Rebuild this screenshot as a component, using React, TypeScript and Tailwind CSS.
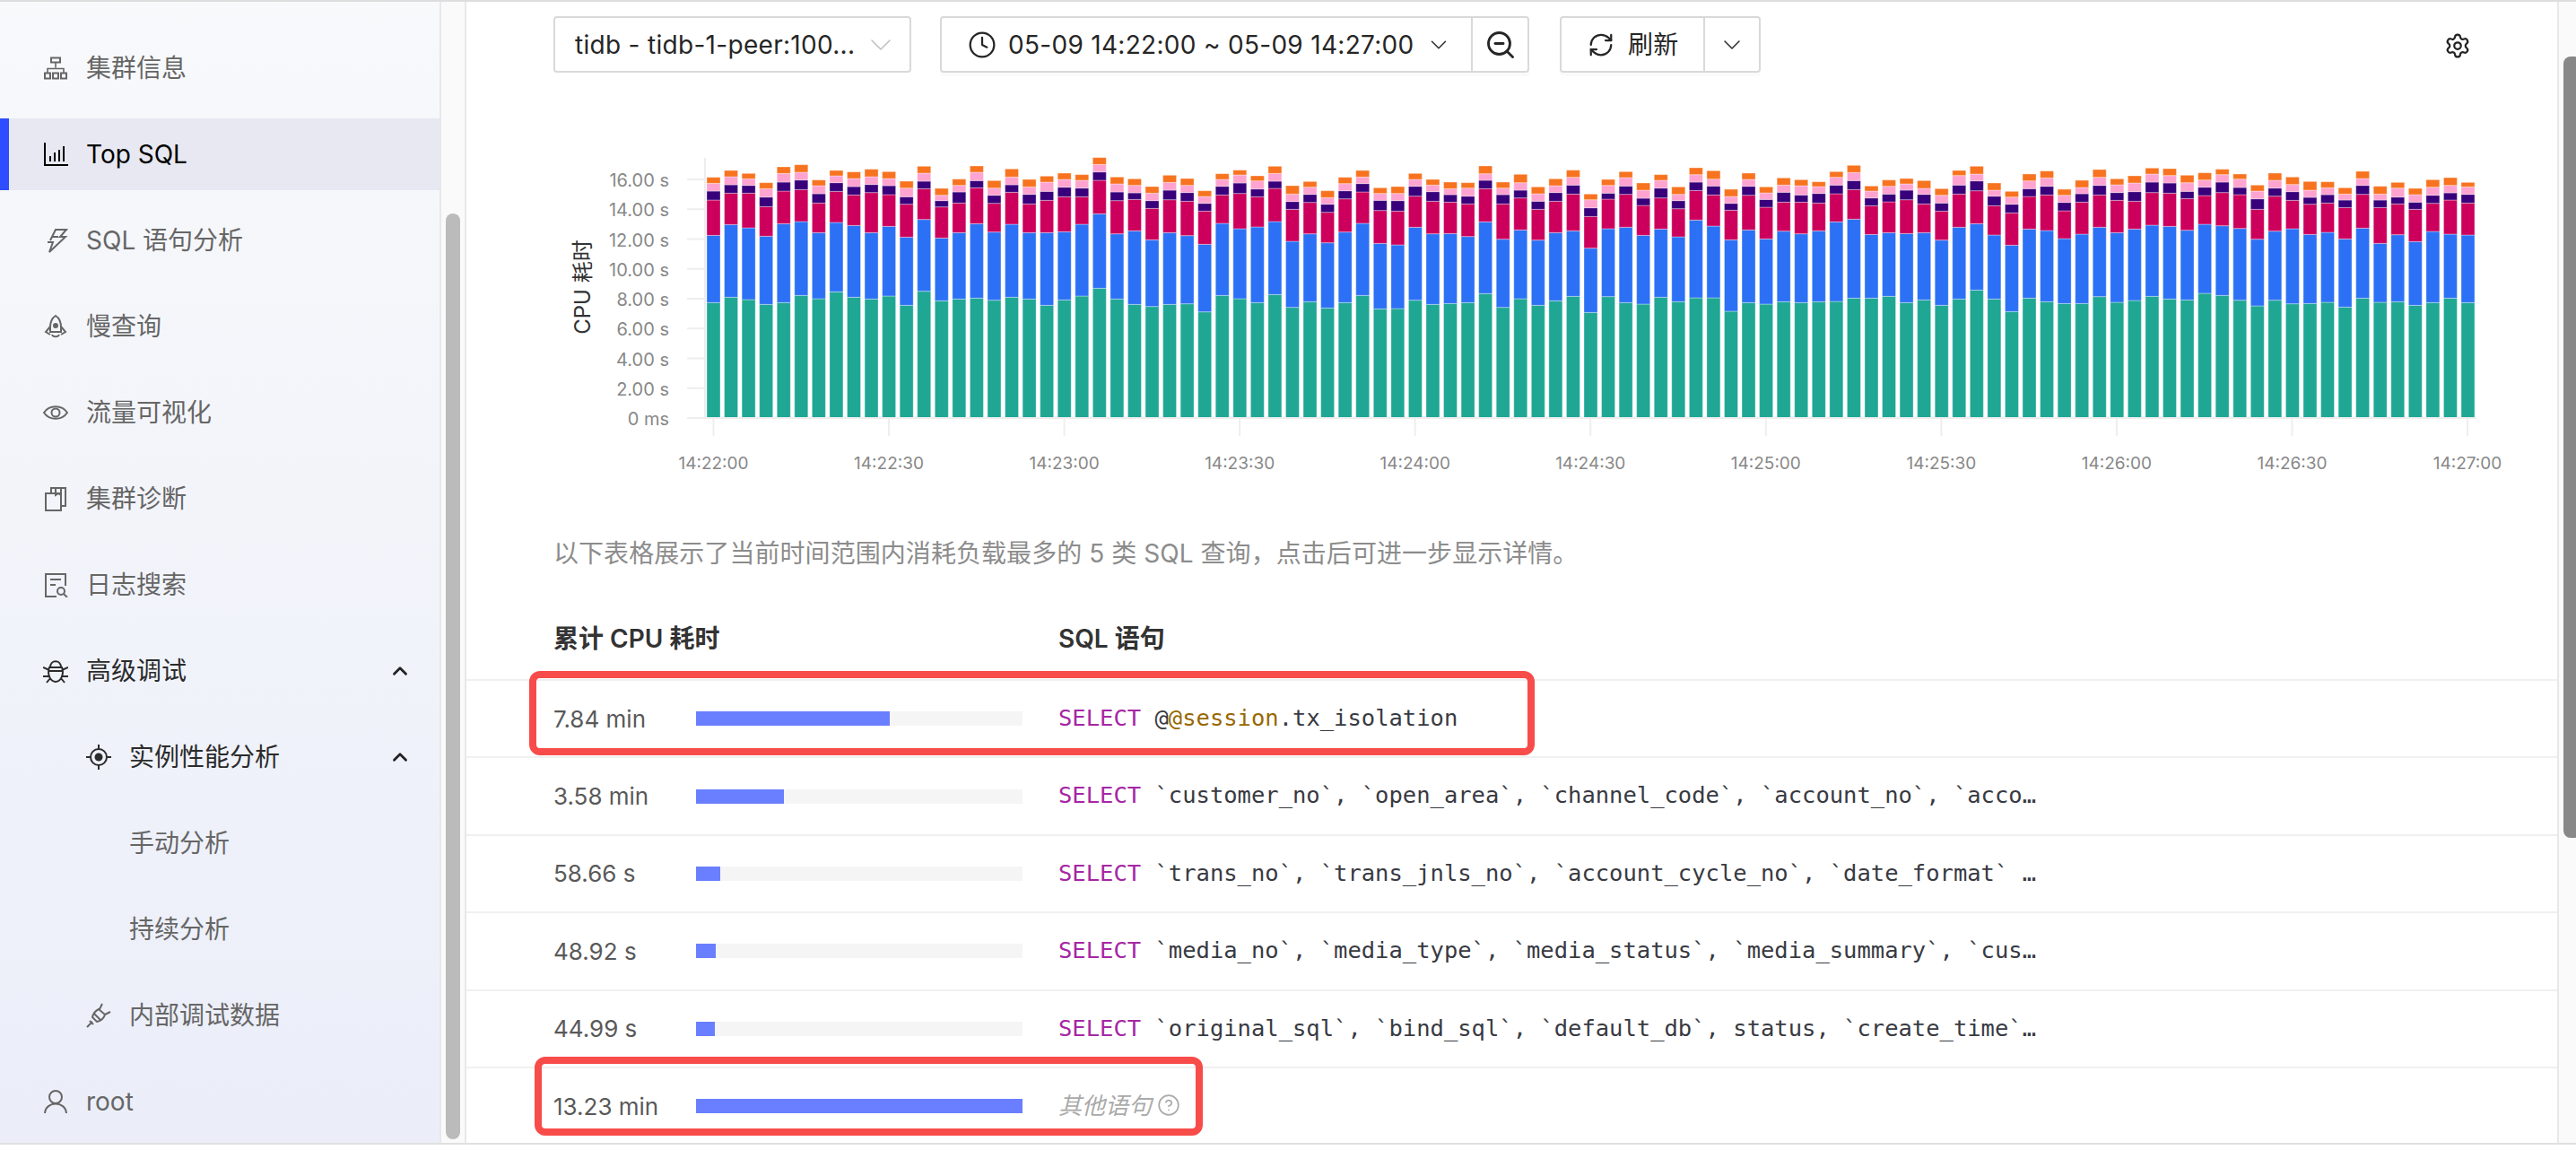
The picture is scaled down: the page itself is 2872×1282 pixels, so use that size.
import type { ReactNode } from 'react';
import { ChevronDown, ChevronUp, CircleHelp, Clock, RefreshCw, Settings, ZoomOut } from 'lucide-react';

// segment tops per bar, measured off the chart: teal, blue, crimson, purple, pink, orange
const bars: number[][] = [
  [532, 307, 189, 159, 133, 113], [514, 271, 166, 138, 111, 90], [522, 282, 166, 140, 118, 100], [538, 310, 211, 179, 151, 131],
  [532, 268, 159, 129, 100, 78], [508, 261, 154, 122, 96, 71], [519, 298, 199, 168, 141, 122], [496, 264, 160, 131, 108, 90],
  [514, 274, 172, 144, 117, 95], [520, 298, 164, 137, 111, 86], [510, 277, 171, 141, 117, 94], [541, 313, 203, 178, 149, 126],
  [494, 254, 151, 126, 99, 76], [526, 316, 212, 191, 173, 150], [520, 298, 199, 162, 140, 119], [517, 268, 148, 124, 96, 75],
  [524, 296, 200, 173, 149, 124], [514, 270, 163, 138, 112, 85], [520, 298, 202, 170, 145, 120], [541, 298, 190, 160, 129, 109],
  [523, 295, 178, 146, 120, 99], [510, 270, 178, 149, 123, 104], [484, 235, 123, 95, 70, 47], [520, 302, 191, 162, 135, 112],
  [538, 292, 187, 165, 140, 118], [545, 322, 217, 191, 166, 144], [538, 298, 188, 156, 130, 106], [536, 308, 193, 164, 140, 117],
  [563, 337, 226, 200, 177, 158], [508, 267, 172, 143, 120, 101], [519, 285, 167, 132, 105, 89], [532, 279, 178, 152, 125, 108],
  [505, 261, 150, 126, 100, 76], [548, 327, 220, 194, 169, 141], [529, 302, 197, 170, 146, 127], [550, 332, 230, 203, 181, 158],
  [532, 296, 185, 158, 134, 113], [508, 267, 162, 134, 112, 90], [553, 334, 224, 190, 167, 148], [552, 339, 226, 191, 167, 144],
  [524, 280, 176, 143, 120, 100], [538, 302, 193, 161, 139, 120], [535, 301, 196, 171, 151, 129], [532, 311, 202, 176, 149, 131],
  [502, 262, 151, 123, 101, 75], [548, 320, 202, 171, 149, 129], [519, 289, 182, 156, 131, 103], [541, 323, 220, 193, 168, 145],
  [526, 298, 193, 164, 141, 118], [511, 292, 169, 139, 113, 89], [565, 350, 244, 215, 188, 169], [512, 285, 186, 166, 140, 120],
  [532, 280, 170, 142, 114, 94], [537, 307, 207, 183, 156, 132], [514, 286, 182, 149, 123, 104], [529, 312, 218, 191, 170, 145],
  [516, 256, 157, 129, 104, 81], [516, 276, 172, 142, 119, 91], [561, 322, 223, 200, 177, 153], [532, 289, 173, 143, 120, 99],
  [537, 319, 213, 187, 165, 145], [529, 293, 196, 163, 139, 115], [532, 302, 196, 172, 141, 121], [529, 292, 199, 167, 144, 128],
  [528, 262, 168, 139, 113, 94], [517, 253, 154, 124, 97, 73], [517, 304, 208, 182, 159, 142], [511, 298, 195, 169, 143, 122],
  [532, 301, 188, 156, 135, 117], [523, 298, 202, 170, 150, 124], [541, 323, 226, 199, 173, 151], [520, 280, 169, 139, 107, 90],
  [490, 268, 158, 125, 102, 76], [520, 306, 208, 176, 156, 132], [562, 340, 232, 203, 179, 160], [517, 286, 177, 151, 125, 102],
  [529, 291, 172, 143, 115, 92], [535, 318, 225, 197, 173, 153], [535, 303, 196, 168, 147, 123], [512, 280, 172, 140, 113, 87],
  [531, 298, 190, 164, 138, 118], [525, 286, 193, 161, 132, 108], [511, 273, 164, 129, 102, 82], [520, 277, 166, 132, 107, 84],
  [523, 290, 184, 160, 131, 106], [501, 270, 174, 146, 122, 98], [508, 275, 164, 129, 104, 86], [524, 284, 171, 147, 119, 102],
  [543, 320, 220, 185, 159, 139], [524, 293, 176, 149, 123, 99], [536, 285, 190, 161, 137, 112], [535, 304, 203, 180, 156, 127],
  [531, 297, 199, 171, 148, 128], [547, 319, 214, 189, 169, 148], [517, 283, 170, 140, 117, 93], [531, 334, 214, 189, 169, 143],
  [529, 305, 202, 179, 149, 130], [541, 328, 220, 196, 171, 150], [532, 294, 200, 173, 146, 121], [517, 303, 189, 165, 140, 114],
  [532, 306, 199, 170, 145, 130],
];

const segmentColors = ['#1fa794', '#2c71f5', '#cc005c', '#38007a', '#ffa3d0', '#f7731f'];
const yLabels = ['16.00 s', '14.00 s', '12.00 s', '10.00 s', '8.00 s', '6.00 s', '4.00 s', '2.00 s', '0 ms'];
const xLabels = ['14:22:00', '14:22:30', '14:23:00', '14:23:30', '14:24:00', '14:24:30', '14:25:00', '14:25:30', '14:26:00', '14:26:30', '14:27:00'];

function Chart() {
  return (
    <svg viewBox="520 150 2331 400" className="mt-[69px] block h-[400px] w-[2331px] shrink-0">
      {bars.map((bar, i) => {
        const x = 788 + i * 19.56;
        return bar.map((top, s) => {
          const y = 160 + top / 3;
          const bottom = s === 0 ? 466 : 160 + bar[s - 1] / 3;
          return <rect key={`${i}-${s}`} x={x} y={y} width={15} height={bottom - y} fill={segmentColors[s]} stroke="#fff" strokeOpacity={0.35} strokeWidth={1} />;
        });
      })}
      <path d="M786 176V466M766 466H2761" stroke="#eeeeee" strokeWidth={2} fill="none" />
      {yLabels.map((label, i) => {
        const y = 200 + i * 33.25;
        return (
          <g key={label}>
            <path d={`M766 ${y}H786`} stroke="#eeeeee" strokeWidth={2} />
            <text x={746} y={y + 8} textAnchor="end" fontSize={20} fill="#888888">{label}</text>
          </g>
        );
      })}
      {xLabels.map((label, i) => {
        const x = 795.5 + i * 195.55;
        return (
          <g key={label}>
            <path d={`M${x} 466V486`} stroke="#eeeeee" strokeWidth={2} />
            <text x={x} y={523} textAnchor="middle" fontSize={19} fill="#888888">{label}</text>
          </g>
        );
      })}
      <text x={0} y={0} transform="translate(658 320) rotate(-90)" textAnchor="middle" fontSize={24} fill="#333333">CPU 耗时</text>
    </svg>
  );
}

function Icon({ children }: { children: ReactNode }) {
  return (
    <svg viewBox="0 0 28 28" fill="none" stroke="currentColor" strokeWidth={2} className="h-7 w-7 shrink-0">
      {children}
    </svg>
  );
}

const icons: Record<string, ReactNode> = {
  cluster: <><path d="M9 2.5h10v5H9zM2 19.5h6v6H2zM11 19.5h6v6h-6zM20 19.5h6v6h-6z" /><path d="M14 7.5v6M5 19.5v-5h18v5" strokeWidth={1.6} /></>,
  top: <path d="M2 1v25h26M8 22v-6M13 22v-10M18 22V9M23 22V5" />,
  bolt: <path d="M8 14 14 2h12l-7 8h6L7 27l4-11H5M10 10h7" />,
  rocket: <><path d="M14 2c5 3 6 8 6 13v5H8v-5c0-5 1-10 6-13zM8 14l-5 6 5 3M20 14l5 6-5 3M10 23c1 3 7 3 8 0" /><circle cx="14" cy="13" r="2" fill="currentColor" /></>,
  eye: <><path d="M1 14c6-9 20-9 26 0-6 9-20 9-26 0z" /><circle cx="14" cy="14" r="4.5" /></>,
  diagnose: <path d="M9 8V2h16v20h-5M3 8h17v19H3zM14 2v8l3-2 3 2V2" />,
  log: <><path d="M25 15V2H3v25h12M8 8h12M8 14h6" /><circle cx="20" cy="21" r="4" /><path d="m23 24 4 4" /></>,
  bug: <><path d="M8 10c0-9 12-9 12 0M7 10h14c3 9-2 16-7 16S4 19 7 10zM0 10l7 3M28 10l-7 3M0 20h6M28 20h-6M4 27l4-5M24 27l-4-5M7 14h14" /></>,
  target: <><circle cx="14" cy="14" r="9" /><circle cx="14" cy="14" r="3.5" fill="currentColor" /><path d="M0 14h5M23 14h5M14 0v5M14 23v5" /></>,
  plug: <path d="m1 27 6-6M18 1l-3 6M27 10l-6 3M14 7l7 6c-1 4-5 7-9 8l-5-5c1-4 3-7 7-9zM9 12l7 7M4 20l4 4" />,
  user: <><circle cx="14" cy="9" r="7" /><path d="M2 27c1-14 23-14 24 0" /></>,
};

type NavProps = {
  icon?: string;
  label: string;
  depth?: number;
  active?: boolean;
  dark?: boolean;
  open?: boolean;
};

function NavItem({ icon, label, depth = 0, active, dark, open }: NavProps) {
  const color = active ? 'text-black bg-[#e7e8f1]' : dark ? 'text-[#2b2b2b]' : 'text-[#666666]';
  return (
    <div className={`relative mb-4 flex h-20 shrink-0 items-center text-[28px] ${depth ? 'pl-[96px]' : 'pl-[48px]'} ${color}`}>
      {active && <span className="absolute top-0 left-0 h-full w-[10px] bg-[#2d4dff]" />}
      {icon ? <span className="mr-5">
        <Icon>{icons[icon]}</Icon>
      </span> : <span className="w-12" />}
      <span>{label}</span>
      {open && <ChevronUp size={26} strokeWidth={2.6} className="absolute right-[31px] text-[#222222]" />}
    </div>
  );
}

function Sidebar() {
  return (
    <aside className="flex w-[490px] shrink-0 flex-col overflow-hidden bg-gradient-to-b from-[#f8f9fb] to-[#ebeef9] pt-[34px]">
      <NavItem icon="cluster" label="集群信息" />
      <NavItem icon="top" label="Top SQL" active />
      <NavItem icon="bolt" label="SQL 语句分析" />
      <NavItem icon="rocket" label="慢查询" />
      <NavItem icon="eye" label="流量可视化" />
      <NavItem icon="diagnose" label="集群诊断" />
      <NavItem icon="log" label="日志搜索" />
      <NavItem icon="bug" label="高级调试" dark open />
      <NavItem icon="target" label="实例性能分析" depth={1} dark open />
      <NavItem label="手动分析" depth={1} />
      <NavItem label="持续分析" depth={1} />
      <NavItem icon="plug" label="内部调试数据" depth={1} />
      <NavItem icon="user" label="root" />
    </aside>
  );
}

function Toolbar() {
  return (
    <div className="mt-4 flex h-[63px] shrink-0 items-stretch pl-[97px] text-[28px] tracking-[0.3px] text-[#262626]">
      <div className="flex w-[399px] items-center justify-between rounded border-2 border-[#d9d9d9] pr-[12px] pl-[22px]">
        <span>tidb - tidb-1-peer:100...</span>
        <ChevronDown size={40} strokeWidth={0.9} className="text-[#bfbfbf]" />
      </div>
      <div className="ml-[32px] flex w-[657px] items-center rounded border-2 border-[#d9d9d9] shadow-[0_4px_0_#fafafa]">
        <Clock size={32} strokeWidth={1.7} className="ml-[29px]" />
        <span className="ml-[13px]">05-09 14:22:00 ~ 05-09 14:27:00</span>
        <ChevronDown size={30} strokeWidth={1.3} className="ml-[12px] text-[#333333]" />
        <div className="ml-auto flex h-full w-[63px] items-center justify-center border-l-2 border-[#d9d9d9]">
          <ZoomOut size={36} strokeWidth={1.9} />
        </div>
      </div>
      <div className="ml-[34px] flex w-[224px] items-center rounded border-2 border-[#d9d9d9] shadow-[0_4px_0_#fafafa]">
        <RefreshCw size={30} strokeWidth={1.8} className="ml-[29px]" />
        <span className="ml-[15px]">刷新</span>
        <div className="ml-auto flex h-full w-[62px] items-center justify-center border-l-2 border-[#d9d9d9]">
          <ChevronDown size={32} strokeWidth={1.2} className="text-[#333333]" />
        </div>
      </div>
      <div className="ml-[762px] flex items-center pt-[3px]">
        <Settings size={30} strokeWidth={1.8} className="text-[#222222]" />
      </div>
    </div>
  );
}

const rows = [
  { value: '7.84 min', fill: 216, sql: <><span className="text-[#383a42]">@</span><span className="text-[#986801]">@session</span>.tx_isolation</> },
  { value: '3.58 min', fill: 98, sql: '`customer_no`, `open_area`, `channel_code`, `account_no`, `acco…' },
  { value: '58.66 s', fill: 27, sql: '`trans_no`, `trans_jnls_no`, `account_cycle_no`, `date_format` …' },
  { value: '48.92 s', fill: 22, sql: '`media_no`, `media_type`, `media_status`, `media_summary`, `cus…' },
  { value: '44.99 s', fill: 21, sql: '`original_sql`, `bind_sql`, `default_db`, status, `create_time`…' },
];

function Row({ value, fill, children }: { value: string; fill: number; children: ReactNode }) {
  return (
    <div className="flex h-[86.4px] shrink-0 items-center border-t-2 border-[#f0f0f0] pl-[97px]">
      <div className="w-[159px] text-[26px] text-[#595959]">{value}</div>
      <div className="h-4 w-[364px] bg-[#f5f5f5]">
        <div className="h-full bg-[#6a7fff]" style={{ width: fill }} />
      </div>
      <div className="mb-[2px] ml-10 w-[1092px]">{children}</div>
    </div>
  );
}

function Main() {
  return (
    <main className="flex w-[2331px] shrink-0 flex-col overflow-hidden bg-white">
      <Toolbar />
      <Chart />
      <p className="mt-[47px] h-10 pl-[97px] text-[28px] leading-10 tracking-[0.06px] text-[#8c8c8c]">
        以下表格展示了当前时间范围内消耗负载最多的 5 类 SQL 查询，点击后可进一步显示详情。
      </p>
      <div className="mt-[55px] mb-[25px] flex h-10 pl-[97px] text-[28px] leading-10 font-semibold text-[#333333]">
        <div className="w-[563px]">累计 CPU 耗时</div>
        <div>SQL 语句</div>
      </div>
      {rows.map((row) => (
        <Row key={row.value} value={row.value} fill={row.fill}>
          <code className="font-['DejaVu_Sans_Mono',monospace] text-[25.5px] text-[#383a42]">
            <span className="text-[#a626a4]">SELECT</span> {row.sql}
          </code>
        </Row>
      ))}
      <Row value="13.23 min" fill={364}>
        <span className="flex items-center gap-1.5 text-[26px] text-[#aaaaaa] italic">
          其他语句 <CircleHelp size={26} strokeWidth={1.6} />
        </span>
      </Row>
    </main>
  );
}

export default function App() {
  return (
    <div className="relative flex h-[1282px] w-[2872px] flex-col overflow-hidden bg-white font-['Inter','Noto_Sans_CJK_SC',sans-serif]">
      <div className="flex h-[1276px] shrink-0 border-y-2 border-t-[#dddddd] border-b-[#e0e0e0]">
        <Sidebar />
        <div className="w-[30px] shrink-0 border-x-2 border-[#e8e8e8] bg-[#fafafa]">
          <div className="mx-auto mt-[236px] h-[1032px] w-4 rounded-full bg-[#bbbbbb]" />
        </div>
        <Main />
        <div className="flex-1 border-l-2 border-[#e8e8e8] bg-[#fafafa] pl-[5px]">
          <div className="mt-[61px] h-[871px] w-5 rounded-lg bg-[#888888]" />
        </div>
      </div>
      <div className="pointer-events-none absolute top-[748px] left-[590px] h-[94px] w-[1121px] rounded-xl border-[8px] border-[#f84c4a]" />
      <div className="pointer-events-none absolute top-[1178px] left-[596px] h-[88px] w-[745px] rounded-xl border-[8px] border-[#f84c4a]" />
    </div>
  );
}
